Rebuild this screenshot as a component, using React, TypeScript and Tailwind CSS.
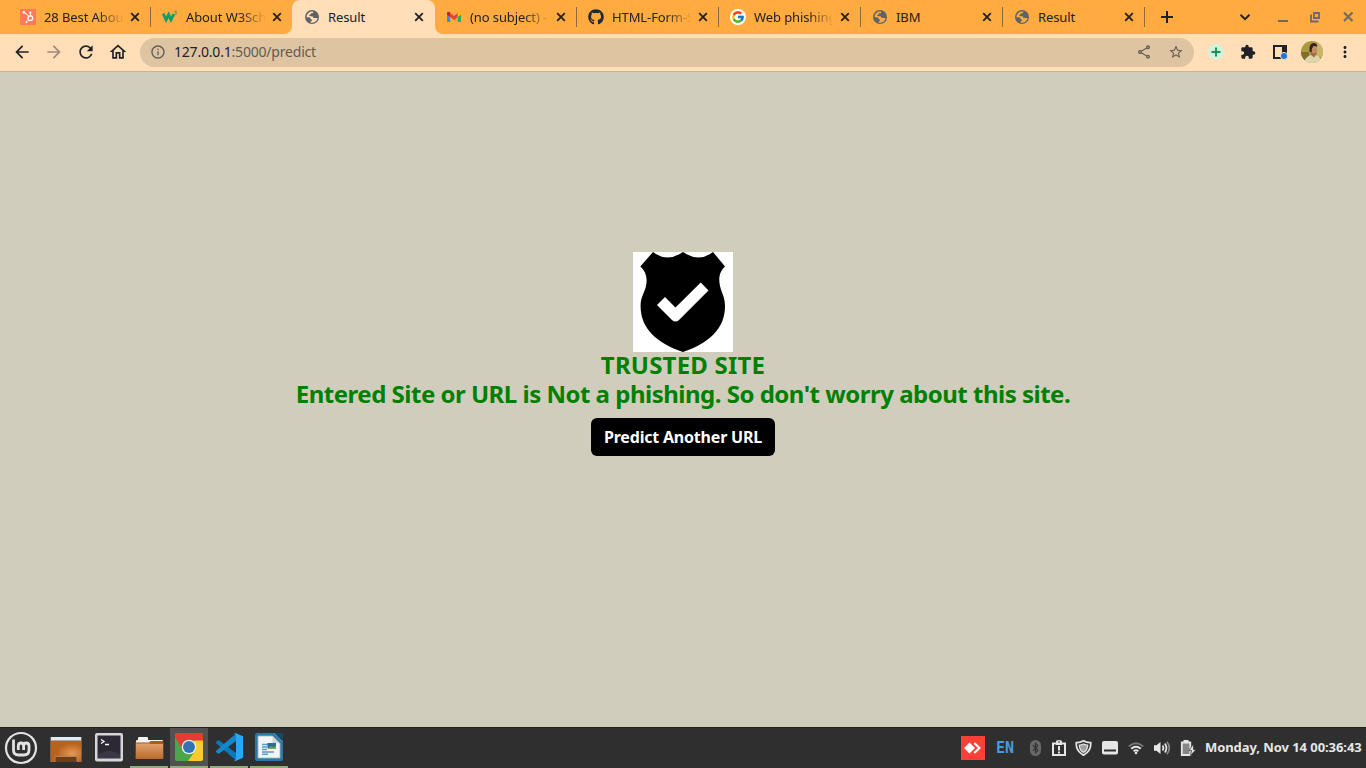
import type { ReactNode } from "react";
import {
  MdArrowBack,
  MdArrowForward,
  MdExtension,
  MdInfoOutline,
  MdMoreVert,
  MdOutlineHome,
  MdRefresh,
  MdStarBorder,
  MdOutlineShare,
} from "react-icons/md";
import { FaGithub, FaHubspot, FaBluetoothB } from "react-icons/fa";
import { FcGoogle } from "react-icons/fc";

function GlobeIcon() {
  return (
    <svg width="16" height="16" viewBox="0 0 16 16">
      <path
        fill="#5f6368"
        fillRule="evenodd"
        d="M8 1a7 7 0 1 0 0 14A7 7 0 0 0 8 1zM9.600 2.700c-.2 1-1.100 1.500-2.300 1.600-.9.100-.6 1.300-1.400 1.500-.6.100-.9.700-.5 1.200.9.400 2.600-.2 3.400.5.700.7.300 1.500 1.300 1.600h2.900c.3 0 .5.200.5.500a5.600 5.600 0 0 1-6.900 4c-.3-.5.100-.9.600-1.400.500-.4 1.100-.6.900-1.200-.2-.7-1.300-.6-1.500-1.300-.2-.9-.9-1.500-2-1.500H2.500A5.600 5.600 0 0 1 9.600 2.700z"
      />
      <path fill="#5f6368" d="M9.300 2.300c1.900.5 3.600 1.900 4.300 3.900l-.4 2.300c-1.200.2-1.600-.2-1.900-1-.3-.9-1.300-.5-2-.9-.600-.4-.5-1.300 0-1.800.6-.5.100-1.100 0-2.500z" />
    </svg>
  );
}

function CloseIcon() {
  return (
    <svg className="ml-[4px] size-[14px] shrink-0" viewBox="0 0 14 14">
      <path d="m3.200 3.200 7.600 7.600M10.800 3.200l-7.600 7.600" stroke="#202124" strokeWidth="1.800" />
    </svg>
  );
}

function W3Icon() {
  return (
    <svg width="17" height="16" viewBox="0 0 17 16">
      <path d="M1.300 4.500 4.400 11 7 5.500 9.500 11 12.600 5" fill="none" stroke="#0a9e6c" strokeWidth="3" />
      <path d="M13.200 2h2.200l-1 1.200q1.300.2.900 1.400-.8.900-2 .2" fill="none" stroke="#0a9e6c" strokeWidth="0.900" />
    </svg>
  );
}

function GmailIcon() {
  return (
    <svg width="16" height="16" viewBox="0 0 16 16">
      <path d="M1 4.500v7.700q0 .900.900.900h2.300V6.800z" fill="#4285f4" />
      <path d="M15 4.500v7.700q0 .900-.900.900h-2.300V6.800z" fill="#34a853" />
      <path d="M4.200 4 8 6.900 11.800 4v4.100L8 11 4.200 8.100z" fill="#ea4335" />
      <path d="M1 4.300C1 2.700 2.700 2.400 3.700 3.200l.5.400v4.500L1 5.700z" fill="#c5221f" />
      <path d="M15 4.300c0-1.600-1.700-1.900-2.700-1.100l-.5.400v4.500L15 5.700z" fill="#fbbc04" />
    </svg>
  );
}

interface TabProps {
  icon: ReactNode;
  title: string;
  faded?: boolean;
  divider?: boolean;
}

function Tab({ icon, title, faded = false, divider = true }: TabProps) {
  return (
    <div className="flex h-[34px] w-[142px] shrink-0 items-center pl-[11px]">
      <div className="flex w-4 shrink-0 justify-center">{icon}</div>
      <div
        className={
          "ml-2 w-[80px] whitespace-nowrap text-[13px] leading-[18px] tracking-[-0.1px] text-[#202124] " +
          (faded ? "[mask-image:linear-gradient(to_right,black_54px,transparent_80px)]" : "")
        }
      >
        {title}
      </div>
      <CloseIcon />
      <div className={"ml-auto h-5 w-px " + (divider ? "bg-[#8f6839]" : "")} />
    </div>
  );
}

function TabStrip() {
  return (
    <div className="flex h-[34px] bg-[#ffdeb8]">
      <div className="flex w-[292px] shrink-0 rounded-br-lg bg-[#ffab40] pl-[9px]">
        <Tab
          icon={
            <span className="flex size-4 items-center justify-center bg-[#ff7a59]">
              <FaHubspot className="size-[12px] text-white" />
            </span>
          }
          title="28 Best Abou"
          faded
        />
        <div className="w-[141px]">
          <Tab icon={<W3Icon />} title="About W3Sch" faded divider={false} />
        </div>
      </div>
      <div className="w-[143px] shrink-0 bg-[#ffab40]">
        <div className="rounded-t-lg bg-[#ffdeb8] pl-px">
          <Tab icon={<GlobeIcon />} title="Result" divider={false} />
        </div>
      </div>
      <div className="flex flex-1 rounded-bl-lg bg-[#ffab40]">
        <Tab icon={<GmailIcon />} title="(no subject) -" faded />
        <Tab icon={<FaGithub className="size-4 shrink-0 text-[#24292f]" />} title="HTML-Form-S" faded />
        <Tab
          icon={
            <span className="flex size-4 items-center justify-center rounded-full bg-white">
              <FcGoogle className="size-[14px]" />
            </span>
          }
          title="Web phishing"
          faded
        />
        <Tab icon={<GlobeIcon />} title="IBM" />
        <Tab icon={<GlobeIcon />} title="Result" />
        <div className="flex flex-1 items-center">
          <svg className="ml-[13px] size-[18px]" viewBox="0 0 18 18">
            <path d="M9 3v12M3 9h12" stroke="#202124" strokeWidth="2" />
          </svg>
          <svg className="ml-[61px] size-4" viewBox="0 0 16 16">
            <path d="m3.500 5.700 4.500 4.500 4.500-4.500" fill="none" stroke="#202124" strokeWidth="2" />
          </svg>
          <svg className="ml-[25px] h-4 w-[84px]" viewBox="0 0 84 16" fill="none" stroke="#6a6967" strokeWidth="2">
            <path d="M0 12h10M66 3.500l8.500 8.500M74.500 3.500 66 12" />
            <path d="M36 4h5v5h-5zM33 5.500v7h7.500" strokeWidth="1.800" />
          </svg>
        </div>
      </div>
    </div>
  );
}

function Toolbar() {
  return (
    <div className="h-[38px] border-b border-[#c9b490] bg-[#ffdeb8] pb-px">
      <div className="flex h-full items-center pl-3 text-[#202124]">
        <MdArrowBack className="size-5" />
        <MdArrowForward className="ml-3 size-5 text-[#a08c77]" />
        <MdRefresh className="ml-3 size-5" />
        <MdOutlineHome className="ml-3 size-5" />
        <div className="ml-3 flex h-[29px] w-[1054px] items-center rounded-full bg-[#dfc4a1] pl-[10px] text-[#5f5b57]">
          <MdInfoOutline className="size-4" />
          <span className="ml-2 text-[14px] leading-5 tracking-[-0.2px]">
            <span className="text-[#202124]">127.0.0.1</span>:5000/predict
          </span>
          <MdOutlineShare className="mr-4 ml-auto size-4" />
          <MdStarBorder className="mr-[10px] size-4" />
        </div>
        <svg className="ml-[14px] size-4" viewBox="0 0 16 16">
          <circle cx="8" cy="8" r="8" fill="#d3f1dc" />
          <path d="M8 3.500v9M3.500 8h9" stroke="#12925a" strokeWidth="1.900" />
        </svg>
        <MdExtension className="ml-4 size-4" />
        <svg className="ml-4 size-4" viewBox="0 0 16 16">
          <path d="M2 2h12v12H2z" fill="none" stroke="#202124" strokeWidth="2" />
          <path d="M10 2h4v8h-4z" fill="#202124" />
          <circle cx="12" cy="12" r="3.600" fill="#1a73e8" stroke="#ffdeb8" strokeWidth="1" />
        </svg>
        <svg className="ml-[13px] size-[22px]" viewBox="0 0 22 22">
          <defs>
            <clipPath id="avatar">
              <circle cx="11" cy="11" r="11" />
            </clipPath>
          </defs>
          <g clipPath="url(#avatar)">
            <path d="M0 0h22v22H0z" fill="#a99b3c" />
            <path d="M0 11h8v8H0z" fill="#806f2c" />
            <path d="M16 2h6v14h-6z" fill="#c6b866" />
            <path d="M3 22c1-5 4-7 7-8l5 0c3 1 5 4 6 8z" fill="#dcd5ae" />
            <path d="M10 10h5v4l-2 2.500-3-2.500z" fill="#a76b4b" />
            <ellipse cx="13" cy="8" rx="3" ry="4.300" fill="#c58b67" />
            <path d="M8.500 8C8 1 16 0 16.500 5.500l-4-.5-1.500 2.500-.5 4-2-1z" fill="#35241c" />
          </g>
        </svg>
        <MdMoreVert className="ml-[13px] size-[18px]" />
      </div>
    </div>
  );
}

function TrustedBadge() {
  return (
    <svg className="size-[100px] shrink-0 bg-white" viewBox="0 0 100 100">
      <path
        d="M20 0Q34 11 50 0Q66 11 80 0L92 14.500C86 20 85.500 27 87 34C88.500 41 92 45 92 54C92 77 76 91 50 100C24 91 7.600 77 7.600 54C7.600 45 11.500 41 13 34C14.500 27 13.500 20 7.300 14.500Z"
        fill="black"
      />
      <path d="M24 53 32 45 42.500 55.500 67.700 30.500 75.500 38.500 46 68Q42.500 71 39 68Z" fill="white" />
    </svg>
  );
}

function ResultPage() {
  return (
    <main className="flex flex-1 flex-col items-center bg-[#d1cdbc] pt-[180px]">
      <TrustedBadge />
      <h1 className="h-[29px] whitespace-nowrap text-[24px] leading-[26px] font-bold tracking-[0.2px] text-[#008000]">
        TRUSTED SITE
      </h1>
      <h2 className="h-[29px] whitespace-nowrap text-[24px] leading-[26px] font-bold tracking-[-0.5px] text-[#008000]">
        Entered Site or URL is Not a phishing. So don't worry about this site.
      </h2>
      <button className="mt-2 h-[38px] w-[184px] rounded-md bg-black text-[16px] font-bold whitespace-nowrap tracking-[-0.2px] text-white">
        Predict Another URL
      </button>
    </main>
  );
}

function MintIcon() {
  return (
    <svg width="34" height="34" viewBox="0 0 34 34" fill="none" stroke="#e2e2e2">
      <circle cx="17" cy="17" r="15" strokeWidth="2.200" />
      <path
        d="M9.500 8.500v10.500q0 5 5 5h5.500q5 0 5-5v-4q0-3-2.700-3t-2.700 3v4M19.600 15q0-3-2.600-3t-2.700 3v4"
        strokeWidth="2.800"
      />
    </svg>
  );
}

function DesktopIcon() {
  return (
    <svg className="translate-y-px" width="32" height="27" viewBox="0 0 32 27">
      <defs>
        <radialGradient id="desk" cx=".7" cy=".6">
          <stop offset="0" stopColor="#e49a58" />
          <stop offset="1" stopColor="#b9621b" />
        </radialGradient>
      </defs>
      <path d="M0 1h32v25H0z" fill="#6e6257" />
      <path d="M1 5h30v21H1z" fill="url(#desk)" />
      <path d="M1 1h30v3.500H1z" fill="#e8e8e8" />
      <path d="M5 26v-5.500h22V26" fill="#6d3e1c" stroke="#bd824f" />
    </svg>
  );
}

function TerminalIcon() {
  return (
    <svg width="28" height="29" viewBox="0 0 28 29">
      <rect x="0" y="0" width="28" height="28.500" rx="2" fill="#d6d6da" />
      <path d="M2.500 2.500h23v23h-23z" fill="#2c2935" />
      <path d="m6 6.500 3 2-3 2M10 11.500h4" fill="none" stroke="white" strokeWidth="1.300" />
      <path d="M3 22q11-8 22 0v3H3z" fill="#3c3747" />
    </svg>
  );
}

function FolderIcon() {
  return (
    <svg className="translate-y-px" width="29" height="23" viewBox="0 0 29 23">
      <path d="M1 4q0-1 1-1h1V1q0-1 1-1h8q1 0 1 1v2h14q1 0 1 1v6H1z" fill="#f5f2ef" />
      <path d="M.5 5.500H14L15.500 4h12.500l.5 1v17H.5z" fill="#a65b22" />
      <path d="M1 6.500h13.500L16 7h12v15H1z" fill="url(#folder)" />
      <defs>
        <linearGradient id="folder" x1="0" y1="0" x2="0" y2="1">
          <stop offset="0" stopColor="#e0a26b" />
          <stop offset="1" stopColor="#b8692c" />
        </linearGradient>
      </defs>
    </svg>
  );
}

function ChromeIcon() {
  return (
    <svg width="28" height="28" viewBox="0 0 28 28">
      <defs>
        <clipPath id="chrome">
          <rect width="28" height="28" rx="2" />
        </clipPath>
      </defs>
      <g clipPath="url(#chrome)">
        <path d="M0 0h28v28H0z" fill="#4da54b" />
        <path d="M28 7v21H13l7.500-10.500L19 7z" fill="#fbcb2d" />
        <path d="M0 0h28v7.500H14L8 17 0 4z" fill="#e33b36" />
      </g>
      <circle cx="14" cy="14" r="7.300" fill="#f1f1ee" />
      <circle cx="14" cy="14" r="6" fill="#3273b4" />
    </svg>
  );
}

function CodeIcon() {
  return (
    <svg width="28" height="28" viewBox="0 0 28 28">
      <path d="m1.200 8.700 1.500-1.300q.8-.5 1.600.1L21 20v7.500L1.200 10.200q-.7-.8 0-1.500z" fill="#0879bd" />
      <path d="m1.200 19.300 1.500 1.300q.8.500 1.600-.1L21 8V.5L1.200 17.800q-.7.800 0 1.500z" fill="#1387cb" />
      <path d="M20.500 0 28 3.300v21.400L20.500 28q-.8 0-1.200-.7L21 26V2L19.300.7Q19.700 0 20.500 0z" fill="#2aa7f2" />
    </svg>
  );
}

function WriterIcon() {
  return (
    <svg width="28" height="28" viewBox="0 0 28 28">
      <path d="M2 0h16l10 10v16q0 2-2 2H2q-2 0-2-2V2q0-2 2-2z" fill="#2a78a5" />
      <path d="M18 0h9q1 0 1 1v9z" fill="#164968" />
      <path d="M18.500 0 28 9.500" stroke="#79b7d8" />
      <path d="M3 3h14.500l7.500 7.500V25H3z" fill="#f1f3f4" stroke="#a9b7bf" strokeWidth=".8" />
      <path d="M17.500 3.500v6.500H24z" fill="#cbd3d7" />
      <path d="M7 11.500h6M7 14h5M7 16.500h5M7 19h12M7 21.300h6" stroke="#5e9cc4" strokeWidth="1.400" />
      <path d="M12.500 10h8.500v5.500h-8.500z" fill="#2b6b94" />
      <path d="m12.500 15.500 3-2.500 2 1 3.500-1v2.500z" fill="#6f9a42" />
    </svg>
  );
}

interface LauncherProps {
  children: ReactNode;
  running?: boolean;
  focused?: boolean;
}

function Launcher({ children, running = false, focused = false }: LauncherProps) {
  return (
    <div
      className={
        "flex h-[40px] w-[38px] items-center justify-center border-b-2 " +
        (running ? "border-[#93ab7b] " : "border-transparent ") +
        (focused ? "bg-[#515151]" : "")
      }
    >
      {children}
    </div>
  );
}

function TrayIcons() {
  return (
    <div className="flex items-center">
      <div className="flex h-4 w-[11px] items-center justify-center rounded-full bg-[#686868] text-[#2f2f2f]">
        <FaBluetoothB className="size-[12px]" />
      </div>
      <svg className="ml-[11px]" width="14" height="16" viewBox="0 0 14 16">
        <path d="M1 3.500h12V15H1z" fill="none" stroke="#e6e6e6" strokeWidth="2" />
        <path d="M4 3V1.500Q4 0 7 0t3 1.500V5H4z" fill="#e6e6e6" />
        <circle cx="7" cy="2" r=".8" fill="#2f2f2f" />
        <path d="M7 6v4.500M7 11.500v2" stroke="#e6e6e6" strokeWidth="2" />
      </svg>
      <svg className="ml-[9px]" width="17" height="16" viewBox="0 0 17 16">
        <path
          d="M8.500.800Q11.500 2.800 15.700 2.600 16.500 10.500 8.500 15.300.500 10.500 1.300 2.600 5.500 2.800 8.500.800z"
          fill="none"
          stroke="#e6e6e6"
          strokeWidth="1.700"
        />
        <path d="M8.500 4q2 1.200 4.200 1.200.2 4.300-4.200 7.300Q4.100 9.500 4.300 5.200q2.200 0 4.200-1.200z" fill="#a0a0a0" stroke="#e6e6e6" strokeWidth="1.200" />
      </svg>
      <svg className="ml-[10px]" width="16" height="14" viewBox="0 0 16 14">
        <rect width="16" height="13.500" rx="2" fill="#e6e6e6" />
        <path d="M2 9.500h12" stroke="#2f2f2f" strokeWidth="2" />
      </svg>
      <svg className="ml-[10px]" width="16" height="14" viewBox="0 0 16 14" fill="none" strokeWidth="1.800">
        <path d="M.8 5.500Q8-1 15.200 5.500" stroke="#777777" />
        <path d="M3.200 7.800q4.800-4.200 9.600 0M5.600 10.200q2.400-2 4.800 0" stroke="#e6e6e6" />
        <circle cx="8" cy="12" r="1.300" fill="#e6e6e6" />
      </svg>
      <svg className="ml-[10px]" width="17" height="16" viewBox="0 0 17 16" fill="none" strokeWidth="1.700">
        <path d="M0 5.200h2.500L6.500 2v12l-4-3.200H0z" fill="#e6e6e6" />
        <path d="M8.500 5.500q2 2.500 0 5M10.800 3.500q3.300 4.500 0 9" stroke="#e6e6e6" />
        <path d="M13 1.800q4.600 6.200 0 12.400" stroke="#888888" />
      </svg>
      <svg className="ml-[9px]" width="17" height="16" viewBox="0 0 17 16">
        <path d="M1.800 2.500h8.500v12.500H1.800z" fill="#858585" stroke="#e6e6e6" strokeWidth="1.800" />
        <path d="M3.500 0h5v2.500h-5z" fill="#e6e6e6" />
        <path d="m13.500 4-4.500 6.500h2.500l-1 5L16 9.500h-2.500z" fill="#e6e6e6" stroke="#2f2f2f" strokeWidth=".7" />
      </svg>
    </div>
  );
}

function Taskbar() {
  return (
    <footer className="flex h-[41px] shrink-0 items-center border-t border-[#1f1f1f] bg-[#2f2f2f]">
      <div className="ml-1 w-[45px]">
        <MintIcon />
      </div>
      <div className="w-[46px] pl-px">
        <DesktopIcon />
      </div>
      <div className="w-[35px] -translate-y-px">
        <TerminalIcon />
      </div>
      <div className="flex gap-[2px]">
        <Launcher running>
          <FolderIcon />
        </Launcher>
        <Launcher running focused>
          <ChromeIcon />
        </Launcher>
        <Launcher running>
          <CodeIcon />
        </Launcher>
        <Launcher running>
          <WriterIcon />
        </Launcher>
      </div>
      <svg className="ml-auto" width="24" height="24" viewBox="0 0 24 24">
        <path d="M0 0h24v24H0z" fill="#fb4037" />
        <path d="m3 12 5.500-5.500L14 12l-5.500 5.500zM12.500 7.800 14 6.300l6 5.700-6 5.700-1.500-1.500L17 12z" fill="white" />
      </svg>
      <span className="ml-[11px] w-[34px] font-['DejaVu_Sans_Mono',monospace] text-[15px] leading-5 font-bold text-[#4b9bd8]">
        EN
      </span>
      <TrayIcons />
      <span className="ml-[8px] w-[161px] whitespace-nowrap text-[13px] font-bold tracking-[-0.07px] text-[#e6e6e6]">
        Monday, Nov 14 00:36:43
      </span>
    </footer>
  );
}

export default function App() {
  return (
    <div className="flex h-[768px] w-[1366px] flex-col overflow-hidden font-['Noto_Sans',sans-serif]">
      <TabStrip />
      <Toolbar />
      <ResultPage />
      <Taskbar />
    </div>
  );
}
